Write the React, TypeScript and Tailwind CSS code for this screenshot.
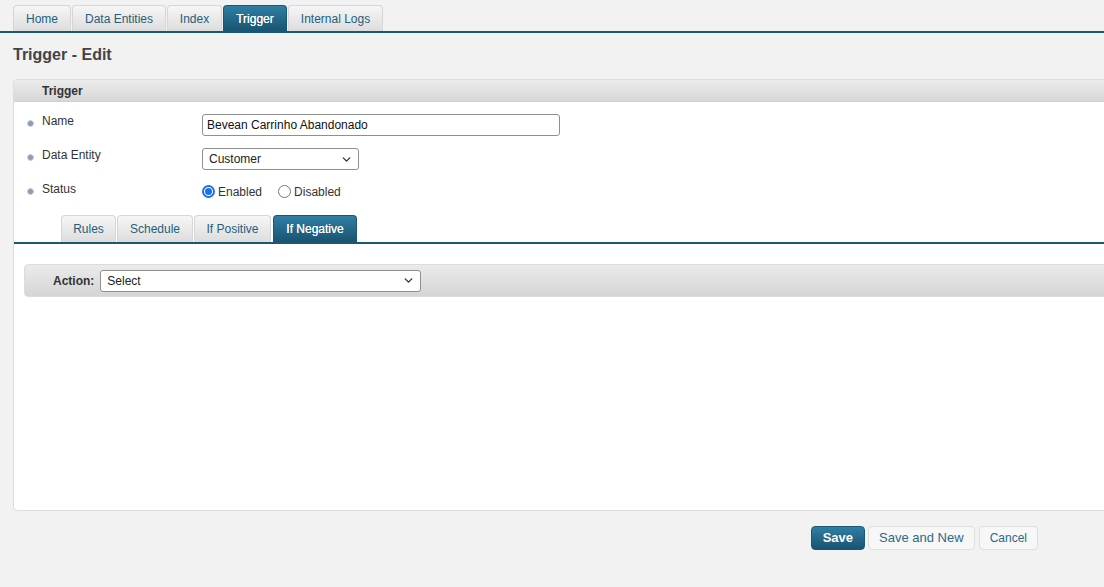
import { ChevronDown } from 'lucide-react';

const topTabs = ['Home', 'Data Entities', 'Index', 'Trigger', 'Internal Logs'];
const subTabs = ['Rules', 'Schedule', 'If Positive', 'If Negative'];

function Tab({ label, active, className = '' }: { label: string; active?: boolean; className?: string }) {
  return (
    <div
      className={
        'flex items-center justify-center rounded-t-[4px] border border-b-0 text-[12px] ' +
        (active
          ? 'border-[#1b5874] bg-gradient-to-b from-[#2f7fa4] to-[#195471] text-white [text-shadow:0_0_0.4px_#fff]'
          : 'border-[#d6d6d6] bg-gradient-to-b from-[#f6f6f6] to-[#dddddd] text-[#1f5f7e]') +
        ' ' +
        className
      }
    >
      {label}
    </div>
  );
}

function Bullet() {
  return <span className="inline-block w-[7px] h-[7px] rounded-full bg-[#8d9bb0] border-[1.5px] border-[#c8d0da]" />;
}

function Select({ value, className }: { value: string; className: string }) {
  return (
    <div
      className={
        'flex items-center justify-between border border-[#8f8f8f] rounded-[3px] bg-white pl-[6px] pr-[5px] text-[12px] text-[#222] ' +
        className
      }
    >
      <span>{value}</span>
      <ChevronDown className="w-[13px] h-[13px] text-[#333]" strokeWidth={2.5} />
    </div>
  );
}

function Radio({ checked, label }: { checked?: boolean; label: string }) {
  return (
    <label className="flex items-center gap-[3px] text-[12px] text-[#333]">
      <span
        className={
          'w-[13px] h-[13px] rounded-full flex items-center justify-center ' +
          (checked ? 'border-2 border-[#1a73e8] bg-white' : 'border border-[#767676] bg-white')
        }
      >
        {checked && <span className="w-[7px] h-[7px] rounded-full bg-[#1a73e8]" />}
      </span>
      <span className="mt-[1px]">{label}</span>
    </label>
  );
}

function FieldLabel({ text }: { text: string }) {
  return (
    <div className="w-[188px] flex items-center gap-[8px] pl-[13px] mt-[-2px] text-[12px] text-[#333]">
      <span className="mt-[4px] flex">
        <Bullet />
      </span>
      <span>{text}</span>
    </div>
  );
}

export default function App() {
  return (
    <div className="w-[1104px] h-[587px] bg-[#f2f2f2] overflow-hidden font-['Liberation_Sans',Arial,sans-serif]">
      {/* main navigation */}
      <div className="pt-[5px] border-b-2 border-[#1b5874]">
        <div className="flex gap-[1px] pl-[13px] h-[26px]">
          {topTabs.map((t) => (
            <Tab
              key={t}
              label={t}
              active={t === 'Trigger'}
              className={
                t === 'Home'
                  ? 'w-[58px]'
                  : t === 'Data Entities'
                  ? 'w-[94px]'
                  : t === 'Index'
                  ? 'w-[55px]'
                  : t === 'Trigger'
                  ? 'w-[64px]'
                  : 'w-[95px]'
              }
            />
          ))}
        </div>
      </div>

      <h1 className="pl-[13px] pt-[10px] h-[46px] text-[16px] font-bold text-[#444]">Trigger - Edit</h1>

      {/* trigger panel */}
      <div className="ml-[13px] mr-[-10px] h-[432px] bg-white border border-[#dcdcdc] rounded-[4px] overflow-hidden">
        <div className="h-[22px] bg-gradient-to-b from-[#ececec] to-[#d7d7d7] border-b border-[#d0d0d0] pl-[28px] flex items-center text-[12px] font-bold text-[#333]">
          Trigger
        </div>

        <div className="pt-[12px]">
          <div className="flex items-start h-[34px]">
            <FieldLabel text="Name" />
            <div className="h-[22px] w-[358px] border border-[#8f8f8f] rounded-[3px] px-[4px] flex items-center text-[12px] text-[#111]">
              Bevean Carrinho Abandonado
            </div>
          </div>
          <div className="flex items-start h-[34px]">
            <FieldLabel text="Data Entity" />
            <Select value="Customer" className="h-[22px] w-[157px]" />
          </div>
          <div className="flex items-start h-[34px]">
            <FieldLabel text="Status" />
            <div className="flex gap-[16px]">
              <Radio checked label="Enabled" />
              <Radio label="Disabled" />
            </div>
          </div>
        </div>

        {/* sub tabs */}
        <div className="border-b-2 border-[#1b5874] mt-[-1px]">
          <div className="flex gap-[1px] pl-[47px] h-[27px]">
            {subTabs.map((t) => (
              <Tab
                key={t}
                label={t}
                active={t === 'If Negative'}
                className={
                  t === 'Rules'
                    ? 'w-[55px]'
                    : t === 'Schedule'
                    ? 'w-[76px]'
                    : t === 'If Positive'
                    ? 'w-[77px]'
                    : 'w-[84px] ml-[1px]'
                }
              />
            ))}
          </div>
        </div>

        <div className="pt-[20px] pl-[10px]">
          <div className="h-[33px] flex items-center gap-[6px] pl-[28px] bg-gradient-to-b from-[#ebebeb] to-[#d5d5d5] border border-[#dcdcdc] rounded-l-[4px]">
            <span className="text-[12px] font-bold text-[#333]">Action:</span>
            <Select value="Select" className="h-[22px] w-[321px]" />
          </div>
        </div>
      </div>

      {/* form actions */}
      <div className="flex justify-end gap-[3px] pt-[15px] pr-[66px]">
        <button className="h-[24px] px-[11px] rounded-[4px] bg-gradient-to-b from-[#2f7fa4] to-[#195471] border border-[#1b5874] text-white font-bold text-[13px]">
          Save
        </button>
        <button className="h-[24px] px-[10px] rounded-[4px] bg-[#f7f7f7] border border-[#dedede] text-[#2a6a8a] text-[13px]">
          Save and New
        </button>
        <button className="h-[24px] px-[10px] ml-[1px] rounded-[4px] bg-[#f7f7f7] border border-[#dedede] text-[#2a6a8a] text-[12px]">
          Cancel
        </button>
      </div>
    </div>
  );
}
